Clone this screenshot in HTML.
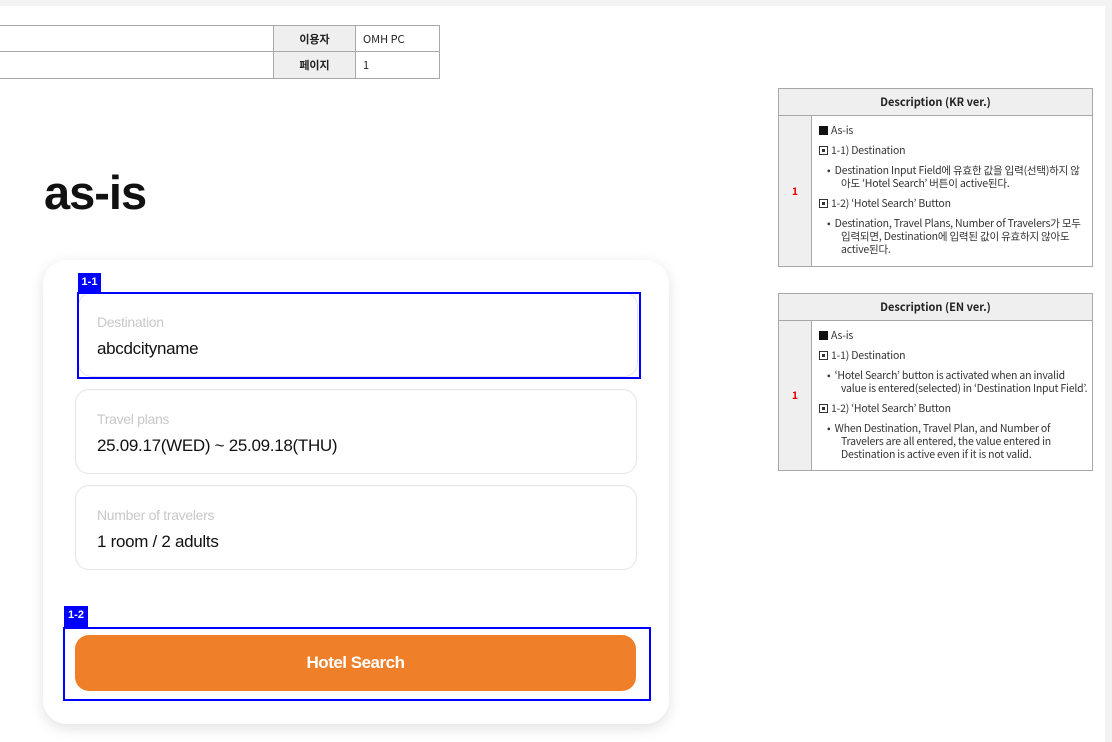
<!DOCTYPE html>
<html><head><meta charset="utf-8"><style>
*{box-sizing:border-box;margin:0;padding:0}
body{width:1112px;height:742px;background:#fff;position:relative;overflow:hidden;font-family:"Liberation Sans","Noto Sans CJK KR",sans-serif;color:#222}
.abs{position:absolute}
.topband{left:0;top:0;width:1112px;height:6px;background:#f3f3f3}
.rband{left:1105px;top:0;width:7px;height:742px;background:#f3f3f3}
table{border-collapse:collapse;position:absolute;font-family:"Noto Sans CJK KR",sans-serif}
td{border:1px solid #a8a8a8;font-size:11px}
.hd{background:#efefef;font-weight:bold;text-align:center}
.desc td{font-size:10.5px}
.desc .num{background:#efefef;color:#e00;font-weight:bold;text-align:center;width:33px}
.desc p{margin:0 0 7px 0;line-height:13px;color:#333;letter-spacing:-.2px}
.desc .b{padding-left:22px;text-indent:-14px}
.sq{display:inline-block;width:9px;height:9px;background:#111;margin-right:3px;vertical-align:-1px}
.sq2{display:inline-block;width:9px;height:9px;border:1px solid #333;margin-right:3px;vertical-align:-1px;position:relative}
.sq2:after{content:"";position:absolute;left:2px;top:2px;width:3px;height:3px;background:#333}
h1{position:absolute;left:44px;top:165px;font-size:47px;font-weight:bold;color:#111;letter-spacing:-1px}
.card{left:43px;top:260px;width:626px;height:464px;background:#fff;border-radius:24px;box-shadow:0 4px 14px rgba(0,0,0,.12)}
.field{position:absolute;left:75px;width:562px;height:85px;border:1px solid #e3e3e3;border-radius:14px;background:#fff}
.field .l{position:absolute;left:21px;top:21px;font-size:14px;color:#c8c8c8;letter-spacing:-.3px}
.field .v{position:absolute;left:21px;top:46px;font-size:17px;color:#111;letter-spacing:-.3px}
.blue{position:absolute;border:2px solid #0000ff}
.tag{position:absolute;background:#0000ff;color:#fff;font-size:11px;font-weight:bold;text-align:center;line-height:19px}
.btn{left:75px;top:635px;width:561px;height:56px;background:#ef8029;border-radius:14px;color:#fff;font-size:17px;font-weight:bold;text-align:center;line-height:56px;letter-spacing:-.5px}
</style></head><body>
<div class="abs topband"></div><div class="abs rband"></div>
<table style="left:-1px;top:25px;width:441px">
<tr style="height:26px"><td style="width:274px"></td><td class="hd" style="width:82px">이용자</td><td style="padding-left:7px">OMH PC</td></tr>
<tr style="height:27px"><td></td><td class="hd">페이지</td><td style="padding-left:7px">1</td></tr>
</table>
<h1>as-is</h1>
<table class="desc" style="left:778px;top:88px;width:315px">
<tr style="height:27px"><td class="hd" colspan="2" style="font-size:11px">Description (KR ver.)</td></tr>
<tr style="height:151px"><td class="num">1</td><td style="padding:8px 9px 2px 7px;vertical-align:top">
<p><span class="sq"></span>As-is</p>
<p><span class="sq2"></span>1-1) Destination</p>
<p class="b">• &nbsp;Destination Input Field에 유효한 값을 입력(선택)하지 않아도 ‘Hotel Search’ 버튼이 active된다.</p>
<p><span class="sq2"></span>1-2) ‘Hotel Search’ Button</p>
<p class="b" style="margin:0">• &nbsp;Destination, Travel Plans, Number of Travelers가 모두 입력되면, Destination에 입력된 값이 유효하지 않아도 active된다.</p>
</td></tr></table>
<table class="desc" style="left:778px;top:293px;width:315px">
<tr style="height:27px"><td class="hd" colspan="2" style="font-size:11px">Description (EN ver.)</td></tr>
<tr style="height:150px"><td class="num">1</td><td style="padding:8px 4px 2px 7px;vertical-align:top">
<p><span class="sq"></span>As-is</p>
<p><span class="sq2"></span>1-1) Destination</p>
<p class="b">• &nbsp;‘Hotel Search’ button is activated when an invalid value is entered(selected) in ‘Destination Input Field’.</p>
<p><span class="sq2"></span>1-2) ‘Hotel Search’ Button</p>
<p class="b" style="margin:0">• &nbsp;When Destination, Travel Plan, and Number of Travelers are all entered, the value entered in Destination is active even if it is not valid.</p>
</td></tr></table>
<div class="abs card"></div>
<div class="field" style="top:292px;left:78px;width:560px"><div class="l" style="left:18px">Destination</div><div class="v" style="left:18px">abcdcityname</div></div>
<div class="blue" style="left:77px;top:292px;width:564px;height:87px"></div>
<div class="tag" style="left:78px;top:273px;width:23px">1-1</div>
<div class="field" style="top:389px"><div class="l">Travel plans</div><div class="v">25.09.17(WED) ~ 25.09.18(THU)</div></div>
<div class="field" style="top:485px"><div class="l">Number of travelers</div><div class="v">1 room / 2 adults</div></div>
<div class="abs btn">Hotel Search</div>
<div class="blue" style="left:63px;top:627px;width:588px;height:74px"></div>
<div class="tag" style="left:64px;top:606px;width:24px;height:21px">1-2</div>
</body></html>
